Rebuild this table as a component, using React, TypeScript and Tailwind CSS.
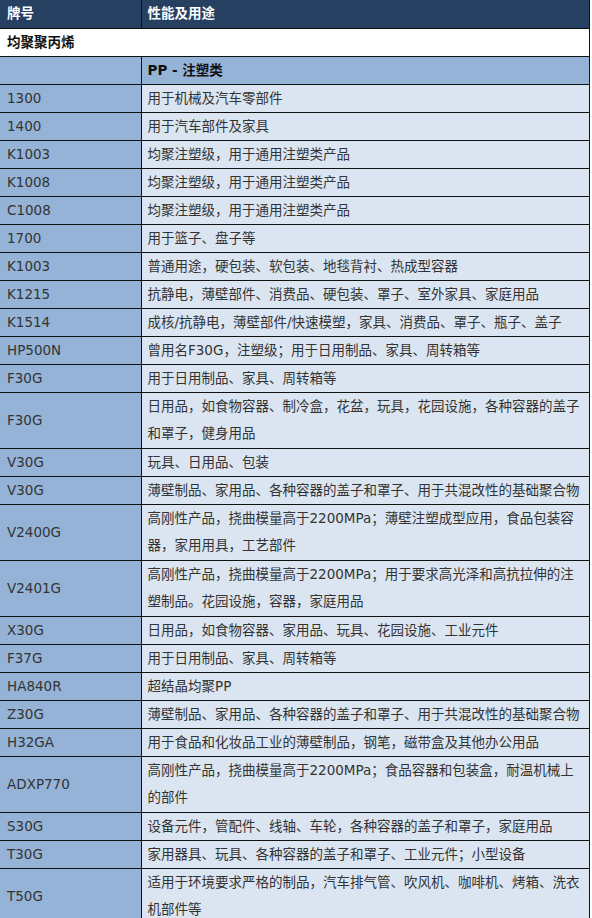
import React from 'react';

type Row = { code: string; use: string[] };

const rows: Row[] = [
  { code: '1300', use: ['用于机械及汽车零部件'] },
  { code: '1400', use: ['用于汽车部件及家具'] },
  { code: 'K1003', use: ['均聚注塑级，用于通用注塑类产品'] },
  { code: 'K1008', use: ['均聚注塑级，用于通用注塑类产品'] },
  { code: 'C1008', use: ['均聚注塑级，用于通用注塑类产品'] },
  { code: '1700', use: ['用于篮子、盘子等'] },
  { code: 'K1003', use: ['普通用途，硬包装、软包装、地毯背衬、热成型容器'] },
  { code: 'K1215', use: ['抗静电，薄壁部件、消费品、硬包装、罩子、室外家具、家庭用品'] },
  { code: 'K1514', use: ['成核/抗静电，薄壁部件/快速模塑，家具、消费品、罩子、瓶子、盖子'] },
  { code: 'HP500N', use: ['曾用名F30G，注塑级；用于日用制品、家具、周转箱等'] },
  { code: 'F30G', use: ['用于日用制品、家具、周转箱等'] },
  { code: 'F30G', use: ['日用品，如食物容器、制冷盒，花盆，玩具，花园设施，各种容器的盖子', '和罩子，健身用品'] },
  { code: 'V30G', use: ['玩具、日用品、包装'] },
  { code: 'V30G', use: ['薄壁制品、家用品、各种容器的盖子和罩子、用于共混改性的基础聚合物'] },
  { code: 'V2400G', use: ['高刚性产品，挠曲模量高于2200MPa；薄壁注塑成型应用，食品包装容', '器，家用用具，工艺部件'] },
  { code: 'V2401G', use: ['高刚性产品，挠曲模量高于2200MPa；用于要求高光泽和高抗拉伸的注', '塑制品。花园设施，容器，家庭用品'] },
  { code: 'X30G', use: ['日用品，如食物容器、家用品、玩具、花园设施、工业元件'] },
  { code: 'F37G', use: ['用于日用制品、家具、周转箱等'] },
  { code: 'HA840R', use: ['超结晶均聚PP'] },
  { code: 'Z30G', use: ['薄壁制品、家用品、各种容器的盖子和罩子、用于共混改性的基础聚合物'] },
  { code: 'H32GA', use: ['用于食品和化妆品工业的薄壁制品，钢笔，磁带盒及其他办公用品'] },
  { code: 'ADXP770', use: ['高刚性产品，挠曲模量高于2200MPa；食品容器和包装盒，耐温机械上', '的部件'] },
  { code: 'S30G', use: ['设备元件，管配件、线轴、车轮，各种容器的盖子和罩子，家庭用品'] },
  { code: 'T30G', use: ['家用器具、玩具、各种容器的盖子和罩子、工业元件；小型设备'] },
  { code: 'T50G', use: ['适用于环境要求严格的制品，汽车排气管、吹风机、咖啡机、烤箱、洗衣', '机部件等'] },
];

export default function App() {
  return (
    <div
      className="bg-white text-[13.5px] text-[#333]"
      style={{ fontFamily: '"DejaVu Sans", "Noto Sans CJK SC", sans-serif' }}
    >
      <table className="w-[590px] border-collapse table-fixed">
        <colgroup>
          <col className="w-[141px]" />
          <col />
        </colgroup>
        <tbody>
          <tr className="bg-[#254061] text-white font-bold">
            <td className="h-[28px] pl-[7px] leading-[27px] border-b border-r border-[#111]">牌号</td>
            <td className="pl-[6px] leading-[27px] border-b border-r border-[#111]">性能及用途</td>
          </tr>
          <tr className="bg-white text-[#111] font-bold">
            <td colSpan={2} className="h-[28px] pl-[7px] leading-[27px] border-b border-r border-[#111]">
              均聚聚丙烯
            </td>
          </tr>
          <tr className="bg-[#95b3d7] text-[#111] font-bold">
            <td className="h-[28px] border-b border-r border-[#111]"></td>
            <td className="pl-[6px] leading-[27px] border-b border-r border-[#111]">PP - 注塑类</td>
          </tr>
          {rows.map((r, i) => (
            <tr key={i}>
              <td className="bg-[#95b3d7] pl-[7px] align-middle border-b border-r border-[#111] whitespace-nowrap">
                {r.code}
              </td>
              <td
                className={
                  r.use.length > 1
                    ? 'bg-[#dbe5f1] pl-[6px] leading-[27.5px] border-b border-r border-[#111] whitespace-nowrap'
                    : 'bg-[#dbe5f1] pl-[6px] h-[28px] leading-[27px] border-b border-r border-[#111] whitespace-nowrap'
                }
              >
                {r.use.map((line, j) => (
                  <div key={j}>{line}</div>
                ))}
              </td>
            </tr>
          ))}
        </tbody>
      </table>
    </div>
  );
}
